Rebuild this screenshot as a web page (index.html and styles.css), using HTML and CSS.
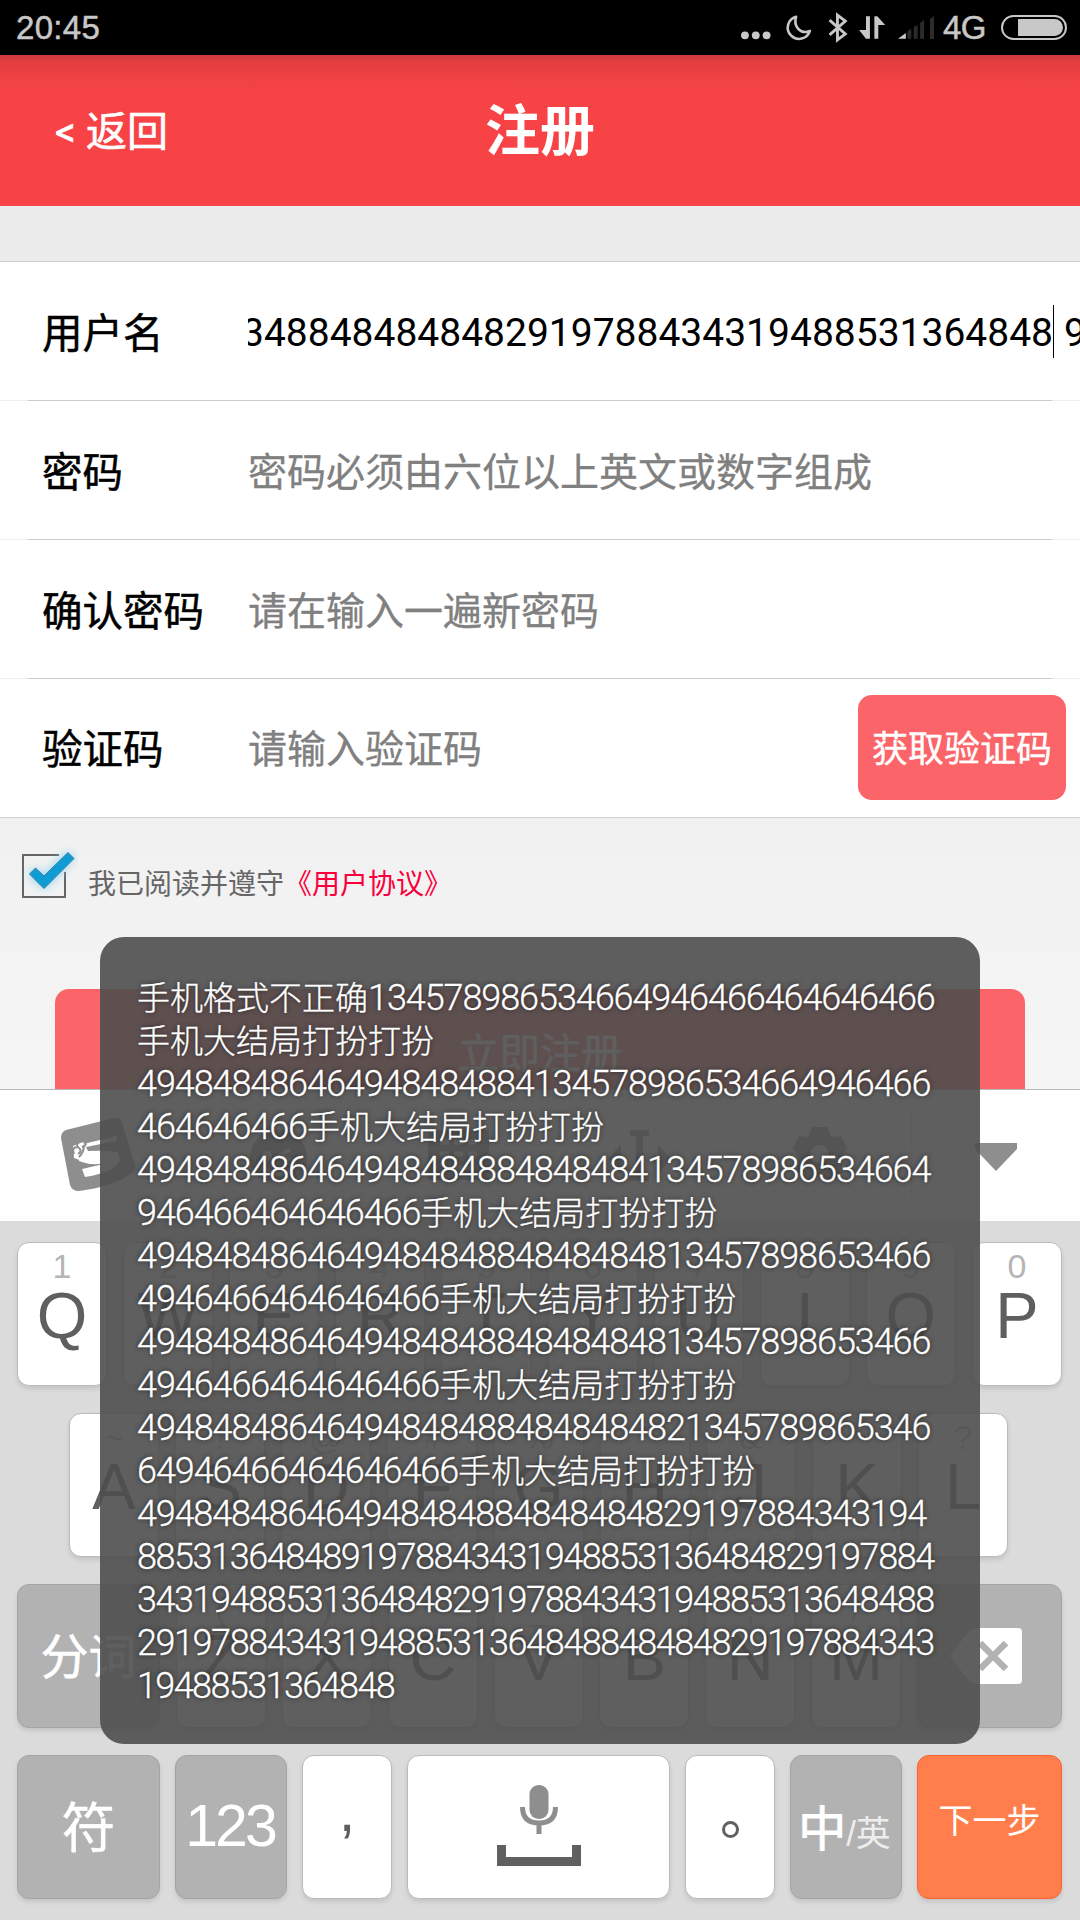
FILE: index.html
```html
<!DOCTYPE html>
<html lang="zh-CN">
<head>
<meta charset="utf-8">
<title>注册</title>
<link rel="stylesheet" href="styles.css">
</head>
<body>
<div class="screen">
  <div class="status">
    <span class="clock">20:45</span>
    <svg class="status-icons" width="190" height="55" viewBox="0 0 190 55">
      <g fill="#c8c8c8">
        <circle cx="4" cy="35.500" r="4"/><circle cx="15" cy="35.500" r="4"/><circle cx="26" cy="35.500" r="4"/>
      </g>
      <path d="M56 16.500A11.500 11.500 0 1 0 70 31C60 35 53 26 56 16.500Z" fill="none" stroke="#c8c8c8" stroke-width="2.600" stroke-linejoin="round"/>
      <path d="M90 20l16 14-8 6V15l8 6-16 14" fill="none" stroke="#c8c8c8" stroke-width="2.900"/>
      <path d="M127 16h4v23h-4l-7-9h7zM135.500 39h4V25h7l-8-9h-3z" fill="#c8c8c8"/>
      <path d="M159.500 39l8-6v6z" fill="#c8c8c8"/>
      <path d="M169 39v-8l4-2v10zM175.500 39V27l4-2v14zM182 39V23l4-3v19z" fill="#2b2b2b"/>
    </svg>
    <svg class="signal-end" width="6" height="55" viewBox="0 0 6 55"><path d="M0 39V19l4-3v23z" fill="#2b2b2b"/></svg>
    <span class="network">4G</span>
    <span class="battery"><i></i></span>
  </div>

  <div class="titlebar">
    <span class="back">&lt; 返回</span>
    <h1>注册</h1>
  </div>

  <div class="form">
    <div class="row"><label>用户名</label><div class="value typed"><span>3488484848482919788434319488531364848</span><i class="caret"></i><span>9</span></div></div>
    <div class="row"><label>密码</label><div class="value">密码必须由六位以上英文或数字组成</div></div>
    <div class="row"><label>确认密码</label><div class="value">请在输入一遍新密码</div></div>
    <div class="row"><label>验证码</label><div class="value">请输入验证码</div><button class="code">获取验证码</button></div>
  </div>

  <div class="after">
    <div class="agree">
      <svg width="64" height="64" viewBox="0 0 64 64">
        <path d="M45 15H9v42h42V32" fill="none" stroke="#666" stroke-width="2"/>
        <path class="glow" d="M15 34l6-6 9 8 24-24 6 6-30 31z" fill="#7fd0f5"/>
        <path d="M15.500 34l6-6 8.500 8 24-23.500 6 6-30 30z" fill="#0f9bd3" stroke="#3d7f9b" stroke-width="1"/>
      </svg>
      <span class="agree-text">我已阅读并遵守<a>《用户协议》</a></span>
    </div>
    <button class="submit">立即注册</button>
  </div>

  <div class="keyboard">
    <div class="tools">
      <svg width="1080" height="131" viewBox="0 1090 1080 131">
        <g fill="#8e8e8e">
          <path d="M66 1130l48-12q6-1 8 5l13 42q2 6-4 9-20 13-52 17-7 0-9-6l-9-47q0-6 5-8z"/>
          <path d="M307 1158a28.500 28.500 0 0 0-57 0q0 24 28 24 29 0 29-24z"/>
          <path d="M428 1130h61v50h-61zM630 1130h19v6h-6v39h6v6h-19v-6h6v-39h-6zM621 1144v30l-13-15zM658 1144v30l13-15z"/>
          <path d="M812 1127h15l4 10 10-1 6 12-6 10 2 14-10 9-13-5-13 5-10-9 2-14-6-10 6-12 9 1z"/>
          <path d="M975 1143h42v6l-21 22-21-22z"/>
        </g>
        <path d="M79 1145l38-9-1 5-30 6 2 4q18-1 30 1l2 8q-4 12-35 17l-3-8 26-6q-18 3-29-2z" fill="#fff"/>
        <path d="M73 1146l10-4 5 10 24 9-22 3-16-6z" fill="#fff"/>
        <path d="M74 1154q-3-7 4-7 5 4 0 7m-1-8q1-8 8-6 3 5-3 7M79 1157q5-5 5-12" fill="none" stroke="#8e8e8e" stroke-width="2"/>
        <path d="M290 1150l-10 5 10 5M265 1170q15 8 28-1" fill="none" stroke="#fff" stroke-width="4"/>
        <circle cx="267" cy="1156" r="5" fill="#fff"/>
        <path d="M440 1142h37M440 1154h37" stroke="#fff" stroke-width="5" stroke-dasharray="9 5"/>
        <path d="M445 1168h27" stroke="#fff" stroke-width="5"/>
        <circle cx="819.500" cy="1154" r="9" fill="#fff"/>
        <path d="M911.500 1110v89" stroke="#ddd"/>
      </svg>
    </div>
    <div class="keys">
      <div class="krow">
        <div class="key"><small>1</small><b>Q</b></div><div class="key"><small>2</small><b>W</b></div><div class="key"><small>3</small><b>E</b></div><div class="key"><small>4</small><b>R</b></div><div class="key"><small>5</small><b>T</b></div><div class="key"><small>6</small><b>Y</b></div><div class="key"><small>7</small><b>U</b></div><div class="key"><small>8</small><b>I</b></div><div class="key"><small>9</small><b>O</b></div><div class="key"><small>0</small><b>P</b></div>
      </div>
      <div class="krow inset">
        <div class="key"><small>~</small><b>A</b></div><div class="key"><small>!</small><b>S</b></div><div class="key"><small>@</small><b>D</b></div><div class="key"><small>#</small><b>F</b></div><div class="key"><small>%</small><b>G</b></div><div class="key"><small>'</small><b>H</b></div><div class="key"><small>&amp;</small><b>J</b></div><div class="key"><small>*</small><b>K</b></div><div class="key"><small>?</small><b>L</b></div>
      </div>
      <div class="krow letters">
        <div class="key gray split">分词</div>
        <div class="key"><small>(</small><b>Z</b></div><div class="key"><small>)</small><b>X</b></div><div class="key"><small>-</small><b>C</b></div><div class="key"><small>_</small><b>V</b></div><div class="key"><small>:</small><b>B</b></div><div class="key"><small>;</small><b>N</b></div><div class="key"><small>/</small><b>M</b></div>
        <div class="key gray wide">
          <svg class="erase" width="74" height="56" viewBox="0 0 74 56"><path d="M20 2q2-2 5-2h43q4 0 4 4v48q0 4-4 4H25q-3 0-5-2L1 30q-1-2 0-4z" fill="#fff"/><path d="M30 15l26 26M56 15L30 41" stroke="#b2b2b2" stroke-width="6.500"/></svg>
        </div>
      </div>
      <div class="krow bottom">
        <div class="key gray symbols">符</div>
        <div class="key gray digits">123</div>
        <div class="key comma">,</div>
        <div class="key space">
          <svg width="84" height="84" viewBox="0 0 84 84"><rect x="32.500" y="0" width="19" height="34" rx="9" fill="#8e8e8e"/><path d="M25.500 22q0 16 16.500 16t16.500-16M42 37v12" fill="none" stroke="#8e8e8e" stroke-width="5"/><path d="M0 60h9v12h66V60h9v21H0z" fill="#606060"/></svg>
        </div>
        <div class="key stop"><i></i></div>
        <div class="key gray lang"><span>中</span><em>/英</em></div>
        <div class="key next">下一步</div>
      </div>
    </div>
  </div>

  <div class="toast">
    <p>手机格式不正确<span>134578986534664946466464646466</span></p>
    <p>手机大结局打扮打扮</p>
    <p><span>494848486464948484884134578986534664946466</span></p>
    <p><span>464646466</span>手机大结局打扮打扮</p>
    <p><span>494848486464948484884848484134578986534664</span></p>
    <p><span>946466464646466</span>手机大结局打扮打扮</p>
    <p><span>494848486464948484884848484813457898653466</span></p>
    <p><span>4946466464646466</span>手机大结局打扮打扮</p>
    <p><span>494848486464948484884848484813457898653466</span></p>
    <p><span>4946466464646466</span>手机大结局打扮打扮</p>
    <p><span>494848486464948484884848484821345789865346</span></p>
    <p><span>64946466464646466</span>手机大结局打扮打扮</p>
    <p class="snug"><span>494848486464948484884848484829197884343194</span></p>
    <p class="tight"><span>8853136484891978843431948853136484829197884</span></p>
    <p class="tight"><span>3431948853136484829197884343194885313648488</span></p>
    <p class="tight"><span>2919788434319488531364848848484829197884343</span></p>
    <p class="tightest"><span>19488531364848</span></p>
  </div>
</div>
</body>
</html>
```
FILE: styles.css
```css
* { box-sizing: border-box; }
body { margin: 0; font-family: Roboto, "Noto Sans CJK SC", sans-serif; }
h1, p { margin: 0; }
button { border: 0; padding: 0; font-family: inherit; color: #fff; background: #fb6468; -webkit-text-stroke: .4px; }

.screen {
  position: relative;
  display: flex;
  flex-direction: column;
  width: 1080px;
  height: 1920px;
  overflow: hidden;
  background: #ebebeb;
}

/* Status bar */
.status { display: flex; align-items: center; height: 55px; padding: 0 13px 0 16px; background: #000; color: #c8c8c8; }
.clock, .network { font: 33px/55px "Liberation Sans", sans-serif; -webkit-text-stroke: .5px #c8c8c8; }
.clock { flex: 1; letter-spacing: .3px; }
.status-icons { width: 187px; margin-right: 2px; }
.network { width: 58px; margin-left: 7px; letter-spacing: -.5px; }
.battery { width: 66px; height: 25px; padding: 2px 2px 2px 15px; border: 2px solid #c8c8c8; border-radius: 13px; }
.battery i { display: block; height: 17px; border-radius: 0 9px 9px 0; background: #c8c8c8; }

/* Title bar */
.titlebar {
  display: grid;
  grid-template-columns: 1fr auto 1fr;
  align-items: center;
  height: 151px;
  padding: 0 55px 6px;
  color: #fff;
  background: linear-gradient(#c93a3c 0, #e03d3f 5px, #ee4143 20px, #f74346 38px);
}
.back { font-size: 41px; padding-top: 1px; -webkit-text-stroke: .6px; }
.titlebar h1 { padding-bottom: 4px; font-size: 55px; font-weight: 700; }

/* Form */
.form { margin-top: 55px; border-top: 1px solid #ccc; border-bottom: 1px solid #d0d0d0; background: #fff; }
.row { display: flex; align-items: center; height: 139px; padding-left: 42px; font-size: 40.500px; color: #000; background: linear-gradient(#ccc, #ccc) 28px 100% / 1024px 1px no-repeat, linear-gradient(#eee, #eee) 0 100% / 100% 1px no-repeat; }
.row:last-child { height: 138px; background: none; }
.row label { width: 206px; padding-bottom: 3px; -webkit-text-stroke: .5px; }
.value { flex: 1; display: flex; align-items: center; overflow: hidden; padding-bottom: 4px; font-size: 39px; color: #808080; white-space: nowrap; -webkit-text-stroke: .3px; }
.typed { padding: 0; color: #000; -webkit-text-stroke: 0; }
.typed span { padding-top: 3px; }
.typed span:first-child { margin-left: -6px; }
.caret { flex: none; width: 1px; height: 53px; margin: 0 10px 1px 0; background: #000; }
.code { width: 208px; height: 105px; margin: 0 14px 2px 0; padding-bottom: 2px; border-radius: 14px; font-size: 36px; }

/* Agreement and submit */
.after { height: 271px; padding-top: 22px; overflow: hidden; background: linear-gradient(#f1f1f1, #f5f5f5); }
.agree { display: flex; align-items: center; height: 64px; padding-left: 14px; }
.glow { filter: blur(5px); }
.agree-text { margin: 25px 0 0 10px; font-size: 28px; line-height: 40px; color: #666; }
.agree a { color: #f9003c; }
.submit { display: block; width: 970px; height: 127px; margin: 85px auto 0; padding-bottom: 5px; border-radius: 14px; font-size: 41px; }

/* Keyboard */
.keyboard { flex: 1; border-top: 1px solid #b8b8b8; background: #dbdbdb; }
.tools { height: 131px; background: #fff; }
.tools svg { display: block; }
.keys { display: flex; flex-direction: column; gap: 27px; padding: 21px 18px 0 17px; }
.krow { display: flex; justify-content: space-between; height: 144px; }
.krow.inset { padding: 0 54px 0 52px; }
.key {
  display: flex;
  flex-direction: column;
  align-items: center;
  width: 90px;
  flex: none;
  border: 1px solid #bababa;
  border-radius: 12px;
  background: #fff;
  box-shadow: 0 3px 4px rgba(0, 0, 0, .1);
  font-family: "Liberation Sans", "Noto Sans CJK SC", sans-serif;
  color: #5f5f5f;
}
.key small { height: 40px; padding-top: 4px; font-size: 34px; line-height: 38px; color: #b5b5b5; }
.key b { font-size: 65px; font-weight: 400; line-height: 66px; }
.gray { justify-content: center; border-color: #a4a4a4; background: #b2b2b2; color: #fff; }
.split { width: 143px; padding-bottom: 6px; font-size: 48px; -webkit-text-stroke: .6px; }
.symbols { width: 143px; padding-bottom: 6px; font-size: 54px; -webkit-text-stroke: .4px; }
.digits { width: 112px; padding: 0 2px 2px 0; font-size: 59px; letter-spacing: -3px; }
.wide { width: 145px; padding-right: 5px; }
.comma { justify-content: center; padding-bottom: 34px; font-size: 60px; }
.space { width: 263px; padding-top: 29px; }
.stop { justify-content: center; }
.stop i { width: 17px; height: 17px; margin-top: 5px; border: 3px solid #606060; border-radius: 50%; }
.lang { flex-direction: row; align-items: baseline; width: 112px; padding-right: 3px; line-height: 148px; }
.lang span { font-size: 48px; -webkit-text-stroke: 1px; }
.lang em { font-size: 35px; font-style: normal; color: #ededed; }
.next { width: 145px; padding-top: 38px; border-color: #fa6330; background: #ff7e4c; color: #fff; font-size: 34px; }

/* Toast over the page */
.toast {
  position: absolute;
  left: 100px;
  top: 937px;
  width: 880px;
  height: 807px;
  padding: 40px 37px;
  border-radius: 24px;
  background: rgba(78, 78, 78, .9);
  color: #fff;
  font-size: 33px;
  font-weight: 300;
  line-height: 43px;
  white-space: nowrap;
  text-shadow: 0 0 5px rgba(0, 0, 0, .7);
  -webkit-text-stroke: .3px;
}
.toast p { height: 43px; }
.toast span { font-size: 36px; letter-spacing: -1.080px; }
.toast .snug span { letter-spacing: -1.180px; }
.toast .tight span { letter-spacing: -1.440px; }
.toast .tightest span { letter-spacing: -1.600px; }
```
